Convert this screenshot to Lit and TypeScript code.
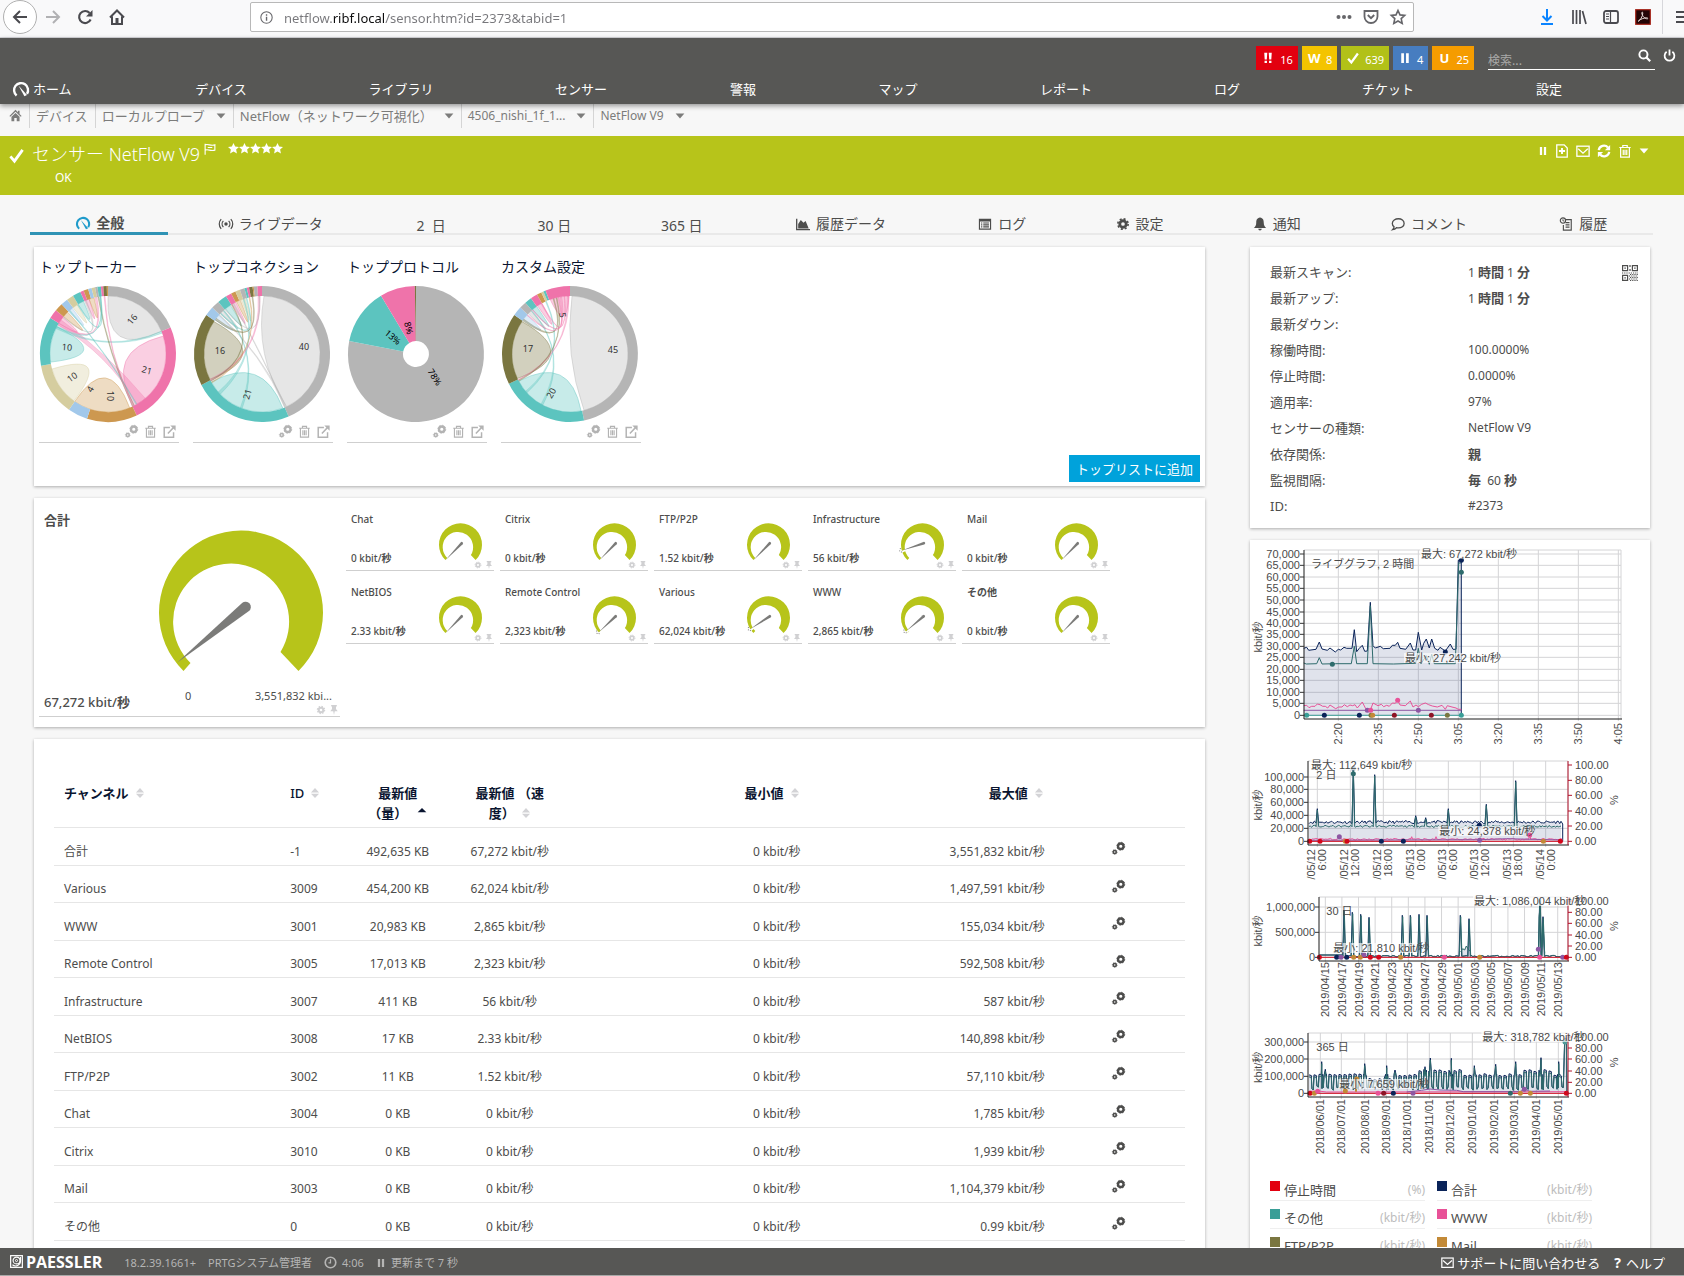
import { LitElement, html, css, svg } from "lit";
import { customElement } from "lit/decorators.js";

type Pt = [number, number];

/* ---------- icons, all on a 16 x 16 grid ---------- */
const tooth = (cx: number, cy: number, r: number, w: number) => svg`
  <circle cx=${cx} cy=${cy} r=${r} fill="none" stroke="currentColor" stroke-width=${w}></circle>
  <circle cx=${cx} cy=${cy} r=${r + w / 2 + 0.6} fill="none" stroke="currentColor" stroke-width="1.8"
    stroke-dasharray="${((r + w / 2 + 0.6) * Math.PI) / 8} ${((r + w / 2 + 0.6) * Math.PI) / 8}"></circle>`;

const shapes: Record<string, unknown> = {
  back: svg`<path d="M15 8H2M8 2 2 8l6 6" fill="none" stroke="currentColor" stroke-width="2"/>`,
  forward: svg`<path d="M1 8h13M8 2l6 6-6 6" fill="none" stroke="currentColor" stroke-width="2"/>`,
  reload: svg`<path d="M13.6 10.5A6 6 0 1 1 12.6 4" fill="none" stroke="currentColor" stroke-width="2.2"/><path d="M15.5 1v6.5H9z" fill="currentColor"/>`,
  house: svg`<path d="M1 8.5 8 1.5l7 7M3 7.500V15h10V7.500" fill="none" stroke="currentColor" stroke-width="2"/><path d="M6.500 9h3v6h-3z" fill="currentColor"/>`,
  info: svg`<circle cx="8" cy="8" r="7" fill="none" stroke="currentColor" stroke-width="1.300"/><path d="M7.200 4h1.700v1.700H7.200zM7.200 7h1.700v5H7.200z" fill="currentColor"/>`,
  dots: svg`<circle cx="2.500" cy="8" r="2" fill="currentColor"/><circle cx="8" cy="8" r="2" fill="currentColor"/><circle cx="13.500" cy="8" r="2" fill="currentColor"/>`,
  pocket: svg`<path d="M1.500 2h13v5.500a6.500 6.500 0 0 1-13 0z" fill="none" stroke="currentColor" stroke-width="1.800"/><path d="m4.800 6 3.200 3.200L11.200 6" fill="none" stroke="currentColor" stroke-width="1.900"/>`,
  starline: svg`<path d="m8 1.500 2 4.400 4.700.5-3.500 3.200 1 4.800L8 12l-4.200 2.400 1-4.800L1.300 6.400 6 5.900z" fill="none" stroke="currentColor" stroke-width="1.600"/>`,
  star: svg`<path d="m8 0 2.400 5.200 5.600.6-4.200 3.800 1.200 5.700L8 12.500l-5 2.800 1.200-5.700L0 5.800l5.600-.6z" fill="currentColor"/>`,
  download: svg`<path d="M8 0v11M3.500 7 8 11.500 12.500 7M2 15h12" fill="none" stroke="currentColor" stroke-width="2"/>`,
  library: svg`<path d="M2 1v14M5.500 1v14M9 1v14M11.500 2l3.500 13" fill="none" stroke="currentColor" stroke-width="1.700"/>`,
  sidebar: svg`<rect x="1" y="2" width="14" height="12" rx="2" fill="none" stroke="currentColor" stroke-width="1.800"/><path d="M7.500 2v12M3 5h3M3 7.500h3M3 10h3" stroke="currentColor" stroke-width="1.200"/>`,
  pdf: svg`<rect x=".7" y=".7" width="14.600" height="14.600" fill="#240506" stroke="#a8261a" stroke-width="1.200"/><path d="M3 12.500c2-1 4.800-5 4.800-8.500 0-1.200-1.300-1.200-1 .3.600 3 3.200 5.700 5.700 5.500.8-.2.300-1.100-1-1-2.500 0-6 1.400-8 3" fill="none" stroke="#e8dcd8" stroke-width="1"/>`,
  burger: svg`<path d="M0 3h16M0 8h16M0 13h16" stroke="currentColor" stroke-width="2"/>`,
  gauge: svg`<path d="M3.600 14.500A7 7 0 1 1 14 12.800" fill="none" stroke="currentColor" stroke-width="2.400"/><path d="M5.500 4.500 14 14l-2.600 1.200z" fill="currentColor"/>`,
  search: svg`<circle cx="6.700" cy="6.700" r="5" fill="none" stroke="currentColor" stroke-width="2.400"/><path d="m10.500 10.500 4.500 4.500" stroke="currentColor" stroke-width="2.800"/>`,
  power: svg`<path d="M4.500 3.500a6 6 0 1 0 7 0M8 .5V8" fill="none" stroke="currentColor" stroke-width="2.200"/>`,
  down2: svg`<path d="M3 1h4l-.6 9H3.600zM9 1h4l-.6 9H9.600zM3.400 11.500h3.200v3.200H3.400zM9.400 11.500h3.200v3.200H9.400z" fill="currentColor"/>`,
  check: svg`<path d="m1.500 9 4.300 5L14.500 2" fill="none" stroke="currentColor" stroke-width="3"/>`,
  pause: svg`<path d="M3 1.500h3.600v13H3zM9.400 1.500H13v13H9.400z" fill="currentColor"/>`,
  homefill: svg`<path d="M8 1 .5 8.500l1 1L8 3.500l6.500 6 1-1L13 6V2h-2v2zM3 9.500 8 5l5 4.500V15H9.500v-4h-3v4H3z" fill="currentColor"/>`,
  flag: svg`<path d="M1.500 1v14.500M1.500 2.500c4-2 7 2 13 0v7c-6 2-9-2-13 0M5 6h6" fill="none" stroke="currentColor" stroke-width="1.500"/>`,
  addreport: svg`<path d="M2 1h8.500L14 4.500V15H2z" fill="none" stroke="currentColor" stroke-width="1.500"/><path d="M8 4.500v7M4.500 8h7" stroke="currentColor" stroke-width="2.200"/>`,
  mail: svg`<rect x="1" y="2.500" width="14" height="11.500" fill="none" stroke="currentColor" stroke-width="1.500"/><path d="m2.500 5.500 5.500 5 5.500-5" fill="none" stroke="currentColor" stroke-width="1.500"/>`,
  refresh: svg`<path d="M2 7a6 6 0 0 1 10.500-3M14 9a6 6 0 0 1-10.500 3" fill="none" stroke="currentColor" stroke-width="2.600"/><path d="M15 1v6H9zM1 15V9h6z" fill="currentColor"/>`,
  trash: svg`<path d="M1.500 4h13M5.500 4V1.700h5V4M3 4v11h10V4M6 6.500v6M8 6.500v6M10 6.500v6" fill="none" stroke="currentColor" stroke-width="1.400"/>`,
  caret: svg`<path d="M1 4h14l-7 8z" fill="currentColor"/>`,
  live: svg`<circle cx="8" cy="8" r="2" fill="currentColor"/><path d="M5 4.500a5 5 0 0 0 0 7M11 4.500a5 5 0 0 1 0 7M2.500 2.500a8 8 0 0 0 0 11M13.500 2.500a8 8 0 0 1 0 11" fill="none" stroke="currentColor" stroke-width="1.400"/>`,
  area: svg`<path d="M.8 2v12.500H16" fill="none" stroke="currentColor" stroke-width="1.500"/><path d="M2.500 13V8l3-4.500 3 3 2.500-2L14.500 13z" fill="currentColor"/>`,
  log: svg`<path d="M1 2h14v12.500H1zM2.300 5v8.200h11.400V5z" fill="currentColor" fill-rule="evenodd"/><path d="M3.500 6.800h1.400M6 6.800h6.500M3.500 9h1.400M6 9h6.500M3.500 11.300h1.400M6 11.300h6.500" stroke="currentColor" stroke-width="1.200"/>`,
  gear: tooth(8, 8, 3.700, 3.200),
  gears: svg`<circle cx="10.800" cy="5.200" r="3.400" fill="none" stroke="currentColor" stroke-width="2.900"/><circle cx="10.800" cy="5.200" r="4.900" fill="none" stroke="currentColor" stroke-width="1" stroke-dasharray="1.900 1.900"/><circle cx="3.400" cy="12.300" r="1.900" fill="none" stroke="currentColor" stroke-width="2"/><circle cx="3.400" cy="12.300" r="3" fill="none" stroke="currentColor" stroke-width=".8" stroke-dasharray="1.200 1.100"/>`,
  bell: svg`<path d="M8 .5c3.500.5 4.300 3 4.300 6 0 3 1 4.500 2.700 6H1c1.700-1.500 2.700-3 2.700-6 0-3 .8-5.500 4.300-6zM6 13.300h4a2 2 0 0 1-4 0z" fill="currentColor"/>`,
  comment: svg`<path d="M8.500 2C12 2 15 4.300 15 7.300s-3 5.200-6.500 5.200c-.8 0-1.500-.1-2.200-.3-1.300 1.300-2.800 2-4.500 2.300 1-1 1.700-2 1.700-3.300C2.300 10.200 1.500 8.800 1.500 7.300 1.500 4.300 5 2 8.500 2z" fill="none" stroke="currentColor" stroke-width="1.500"/>`,
  history: svg`<path d="M8 3h6v12H5V9M7.500 6.500H12M7.500 9H12M7.500 11.500H12" fill="none" stroke="currentColor" stroke-width="1.300"/><circle cx="4.500" cy="4" r="3" fill="none" stroke="currentColor" stroke-width="1.300"/><path d="M4.500 2.500V4.500H6" fill="none" stroke="currentColor" stroke-width="1"/>`,
  external: svg`<path d="M8.500 3H1.500v12H13V9M6 10.500 14 2" fill="none" stroke="currentColor" stroke-width="1.800"/><path d="M9 .5h6.500V7z" fill="currentColor"/>`,
  pin: svg`<path d="M3.500 0h9v2.500h-1.300v4L14 10H9.200L8 16l-1.200-6H2l2.800-3.500v-4H3.500z" fill="currentColor"/>`,
  clock: svg`<circle cx="8" cy="8" r="6.500" fill="none" stroke="currentColor" stroke-width="2"/><path d="M8 4v4.500H5.500" fill="none" stroke="currentColor" stroke-width="1.500"/>`,
  sort: svg`<path d="M8 0l6.500 7h-13zM8 16l6.500-7h-13z" fill="currentColor"/>`,
  sortup: svg`<path d="M8 3l7 7H1z" fill="currentColor"/>`,
  qr: svg`<path d="M.6.6h5v5h-5zM10.400.6h5v5h-5zM.6 10.400h5v5h-5z" fill="none" stroke="currentColor" stroke-width="1.200"/><path d="M2.400 2.400h1.400v1.400H2.400zM12.200 2.400h1.400v1.400h-1.400zM2.400 12.200h1.400v1.400H2.400zM7.400 0h1.200v2H7.400zM7.400 4h1.200v2H7.400z" fill="currentColor"/><path d="M0 8h16M8 9.500h8M7 11h9M8 12.500h8M7 14h9M8 15.500h8" stroke="currentColor" stroke-width="1" stroke-dasharray="1.200 1"/>`,
  logo: svg`<rect x=".8" y=".8" width="14.400" height="14.400" fill="none" stroke="currentColor" stroke-width="1.500"/><circle cx="8" cy="6.800" r="4.200" fill="none" stroke="currentColor" stroke-width="1.400"/><circle cx="8" cy="6.800" r="1.300" fill="none" stroke="currentColor" stroke-width="1.200"/><path d="M13 2.500v5A6 6 0 0 1 3 12" fill="none" stroke="currentColor" stroke-width="1.300"/>`,
};
const icon = (name: string, size = "m") =>
  html`<svg class="ic ${size}" viewBox="0 0 16 16" aria-hidden="true">${shapes[name]}</svg>`;

/* ---------- top list diagrams ---------- */
const G = "#b5b5b5", T = "#5cc4bf", P = "#ef73aa", O = "#cd9850", B = "#a2c8ea", K = "#d5cd9f", V = "#7a7640";
const at = (deg: number, r: number): Pt => {
  const a = (deg * Math.PI) / 180;
  return [68 + r * Math.sin(a), 68 - r * Math.cos(a)];
};
const f = (p: Pt) => p[0].toFixed(1) + " " + p[1].toFixed(1);
const slice = (a: number, b: number, r0: number, r1: number) => {
  const big = b - a > 180 ? 1 : 0;
  return `M${f(at(a, r1))}A${r1} ${r1} 0 ${big} 1 ${f(at(b, r1))}L${f(at(b, r0))}A${r0} ${r0} 0 ${big} 0 ${f(at(a, r0))}Z`;
};
const ribbon = (a: number, b: number, c: number, d: number) =>
  `M${f(at(a, 58))}A58 58 0 0 1 ${f(at(b, 58))}Q68 68 ${f(at(c, 58))}A58 58 0 0 1 ${f(at(d, 58))}Q68 68 ${f(at(a, 58))}Z`;
const lobe = (a: number, b: number, pull: number) => {
  const m = at((a + b) / 2, 58 * pull);
  return `M${f(at(a, 58))}A58 58 0 ${b - a > 180 ? 1 : 0} 1 ${f(at(b, 58))}Q${f(m)} ${f(at(a, 58))}Z`;
};

interface Ring {
  title: string;
  inner: number;
  stops: [number, string][];
  lobes: [number, number, number, string][];
  ribbons: [number, number, number, number, string][];
  labels: [number, number, number, string][];
}
const rings: Ring[] = [
  {
    title: "トップトーカー", inner: 58,
    stops: [[67, G], [155, P], [198, O], [215, B], [260, K], [302, T], [310, P], [317, O], [323, B], [329, K], [336, T], [339, P], [343, O], [346, B], [349, K], [351, G], [354, T], [356, P], [359, V], [360, O]],
    lobes: [[0, 67, -0.1, G], [72, 153, -0.1, P], [158, 215, -0.05, O], [216, 255, -0.1, K], [262, 298, -0.1, T], [302, 309, 0.3, P], [310, 316, 0.2, O], [317, 322, 0.3, B], [323, 328, 0.3, K], [329, 335, 0.35, T], [337, 341, 0.3, P], [341, 346, 0.3, O]],
    ribbons: [[140, 150, 300, 306, P], [67, 69, 296, 298, T], [153, 155, 350, 351, V], [150, 151, 318, 319, T], [154, 155, 356, 357, P], [300, 302, 347, 349, P], [298, 299, 352, 353, T], [309, 310, 336, 338, G], [328, 329, 352, 353, T]],
    labels: [[92, 33, -50, "16"], [107, 84, 15, "21"], [70, 110, 90, "10"], [50, 103, -60, "4"], [32, 91, -35, "10"], [27, 61, 5, "10"]],
  },
  {
    title: "トップコネクション", inner: 58,
    stops: [[157, G], [243, T], [305, V], [313, B], [320, G], [328, T], [333, P], [337, O], [341, K], [345, G], [347, T], [349, P], [352, V], [353, O], [356, G], [360, P]],
    lobes: [[2, 155, -0.15, G], [159, 241, 0, T], [244, 304, -0.2, V], [306, 312, 0.3, B], [314, 319, 0.2, G], [321, 327, 0.2, T], [329, 333, 0.2, P], [334, 338, 0.2, O], [339, 343, 0.2, K]],
    ribbons: [[155, 157, 312, 313, G], [156, 157, 330, 331, G], [200, 202, 318, 319, T], [226, 229, 341, 342, T], [242, 244, 356, 358, P], [240, 241, 347, 348, O], [306, 308, 350, 351, V], [314, 315, 344, 345, T], [320, 321, 357, 358, G], [242, 243, 328, 329, V]],
    labels: [[110, 60, 0, "40"], [53, 108, -75, "21"], [26, 64, 0, "16"]],
  },
  {
    title: "トッププロトコル", inner: 13,
    stops: [[281, G], [329, T], [359, P], [360, V]],
    lobes: [], ribbons: [],
    labels: [[87, 91, 58, "78%"], [45, 51, 40, "13%"], [61, 42, 75, "8%"]],
  },
  {
    title: "カスタム設定", inner: 58,
    stops: [[168, G], [244, T], [305, V], [313, B], [319, G], [325, T], [331, P], [335, O], [337, K], [339, T], [360, P]],
    lobes: [[2, 166, -0.1, G], [169, 242, 0, T], [245, 304, -0.2, V], [306, 312, 0.3, B], [314, 318, 0.2, G], [320, 325, 0.2, T], [326, 331, 0.2, P], [340, 359, 0.35, P]],
    ribbons: [[208, 210, 318, 319, T], [228, 230, 335, 336, T], [243, 244, 357, 359, P], [242, 243, 346, 347, V], [305, 307, 343, 344, V], [312, 313, 350, 352, P], [319, 320, 354, 355, P], [330, 331, 348, 349, P]],
    labels: [[111, 63, 0, "45"], [49, 107, -60, "20"], [26, 62, 0, "17"], [61, 29, 85, "5"]],
  },
];
const ringSvg = (r: Ring) => html`<svg class="ring" viewBox="0 0 136 136" role="img" aria-label=${r.title}>
  ${r.lobes.map(([a, b, p, c]) => svg`<path d=${lobe(a, b, p)} fill=${c} fill-opacity=".34" stroke=${c} stroke-opacity=".4"/>`)}
  ${r.ribbons.map(([a, b, c, d, col]) => svg`<path d=${ribbon(a, b, c, d)} fill=${col} fill-opacity=".34" stroke=${col} stroke-opacity=".4" stroke-width=".7"/>`)}
  ${r.stops.map(([end, c], i) => svg`<path d=${slice(i ? r.stops[i - 1][0] : 0, end, r.inner, 68)} fill=${c}/>`)}
  ${r.labels.map(([x, y, rot, t]) => svg`<text class=${r.inner < 20 ? "rl dark" : "rl"} x=${x} y=${y} text-anchor="middle" dominant-baseline="central" transform="rotate(${rot} ${x} ${y})">${t}</text>`)}
</svg>`;

/* ---------- gauges ---------- */
const dial = (turn: number, big = false, marker = false) => html`<svg class=${big ? "dial big" : "dial"} viewBox="0 0 164 144" aria-hidden="true">
  <path d="M24.500 141A82 82 0 1 1 139.500 141L121.500 122A58 58 0 1 0 31.500 133Z" fill="#b7c41a"/>
  ${marker ? svg`<g transform="rotate(${turn} 87 78)"><path d="M31 128 20 140l-12-2M12 127l-4 4" stroke="#fff" stroke-width="7" fill="none"/><path d="M22 140l-12-2M10 128l4 5" stroke="#888" stroke-width="4" fill="none" stroke-dasharray="4 4"/></g>` : ""}
  <path d="M19 134 83 73a5 5 0 0 1 7 8Z" fill="#7b7b79" transform="rotate(${turn} 87 78)"/>
</svg>`;
const gauges: [string, string, number, boolean][] = [
  ["Chat", "0", -6, false], ["Citrix", "0", -6, false], ["FTP/P2P", "1.52", -6, false], ["Infrastructure", "56", 22, true], ["Mail", "0", -6, false],
  ["NetBIOS", "2.33", -6, false], ["Remote Control", "2,323", -3, true], ["Various", "62,024", 7, true], ["WWW", "2,865", 0, true], ["その他", "0", -6, false],
];

/* ---------- history graphs ---------- */
let seed = 11;
const rnd = () => ((seed = (seed * 16807) % 2147483647) / 2147483647);
const line = (pts: Pt[], dy: number) => pts.map(([x, y], i) => (i ? "L" : "M") + (x / 3 - 10).toFixed(1) + " " + (y / 3 + dy).toFixed(1)).join("");
const noisy = (x0: number, x1: number, step: number, base: number, amp: number, peaks: Pt[], w: number): Pt[] => {
  const out: Pt[] = [];
  for (let x = x0; x <= x1; x += step) {
    if (peaks.some(([px]) => Math.abs(px - x) < w)) continue;
    out.push([x, base - rnd() * amp]);
  }
  peaks.forEach(([x, y]) => out.push([x - w, base - 2], [x, y], [x + w, base - 2]));
  return out.sort((a, b) => a[0] - b[0]);
};
const NAVY = "#0a2359", TEAL = "#2e6b6c", PINK = "#e85298", PURPLE = "#8d57a3", RED = "#d4071b", OCHRE = "#c38a37", WINE = "#8e1426";

interface Graph {
  name: string; h: number; dy: number; left: number; right: number; top: number; axis: number; gap: number;
  ys: [number, string][]; pct: number[]; xs: [number, string, string?][];
  title: [number, number, string]; max: [number, number, string]; min: [number, number, string];
  series: [Pt[], string, number][]; area: Pt[]; dots: [number, number, string][];
  unitY: number;
}
const total: Pt[] = [[191, 340], [200, 337], [206, 346], [228, 343], [238, 321], [246, 342], [262, 346], [270, 339], [286, 351], [295, 343], [302, 345], [312, 337], [320, 340], [336, 340], [343, 284], [350, 350], [358, 340], [367, 331], [374, 349], [382, 348], [391, 202], [399, 332], [406, 339], [421, 334], [430, 341], [450, 340], [457, 331], [466, 331], [473, 322], [480, 340], [497, 343], [511, 324], [519, 345], [527, 345], [535, 292], [545, 345], [551, 325], [559, 312], [568, 339], [575, 312], [584, 340], [594, 346], [600, 337], [616, 348], [631, 327], [639, 343], [648, 343], [655, 76], [664, 76], [664, 541]];
const various: Pt[] = [[191, 384], [199, 387], [230, 386], [238, 368], [246, 387], [286, 386], [334, 386], [343, 334], [350, 386], [382, 386], [391, 212], [399, 386], [460, 387], [527, 385], [535, 340], [543, 386], [559, 362], [568, 388], [575, 358], [583, 386], [646, 386], [656, 84], [663, 84]];
const www: Pt[] = [[191, 512], [200, 511], [207, 518], [215, 514], [225, 514], [232, 507], [240, 509], [248, 514], [256, 514], [263, 519], [270, 510], [287, 521], [296, 516], [306, 516], [313, 509], [322, 515], [330, 510], [338, 512], [345, 509], [352, 519], [367, 501], [377, 521], [384, 527], [391, 526], [399, 504], [414, 512], [424, 508], [431, 515], [440, 511], [448, 514], [457, 504], [466, 505], [473, 496], [480, 510], [496, 512], [511, 498], [519, 516], [528, 510], [535, 515], [545, 508], [556, 504], [566, 509], [577, 513], [592, 516], [606, 511], [616, 523], [622, 512], [636, 516], [648, 519], [655, 523], [664, 523]];
const p2: Pt[] = [[232, 176], [340, 55], [404, 74], [527, 197], [557, 203], [625, 176], [739, 163], [827, 92]];
const p30: Pt[] = [[312, 480], [337, 487], [362, 493], [387, 502], [487, 496], [511, 496], [537, 493], [561, 496], [661, 496], [687, 506], [899, 448], [909, 500]];
const p365: Pt[] = [[245, 140], [256, 163], [374, 146], [440, 152], [465, 165], [555, 155], [571, 129], [634, 130], [703, 152], [767, 148], [827, 140], [903, 128], [956, 140]];
const weekly = (): Pt[] => {
  const out: Pt[] = [];
  for (let x = 207; x < 972; x += 15) {
    const hi = (x > 535 && x < 660) || (x > 850 && x < 935) ? 163 : x > 385 && x < 450 ? 188 : 176;
    const top = hi + rnd() * 6;
    out.push([x, top], [x + 7, top + 2], [x + 9, 212 + rnd() * 12], [x + 13, 214 + rnd() * 12]);
  }
  p365.forEach(([x, y]) => out.push([x - 3, 178], [x, y], [x + 3, 178]));
  out.push([974, 70], [979, 70], [981, 236]);
  return out.sort((a, b) => a[0] - b[0]);
};
const close = (pts: Pt[], zero: number): Pt[] => [[pts[0][0], zero], ...pts, [pts[pts.length - 1][0], zero]];
const d2 = noisy(207, 966, 4, 221, 9, p2, 4);
const d2b = noisy(207, 966, 4, 232, 6, p2.map(([x, y]) => [x, y + 4] as Pt), 4);
const flat30: Pt[] = [[238, 615], [305, 615]];
const d30 = [...flat30, ...noisy(308, 978, 5, 621, 5, p30, 4)];
const y365 = weekly();

const graphs: Graph[] = [
  {
    name: "ライブグラフ", h: 215, dy: -5, left: 54, right: 371, top: 10, axis: 179, gap: 4,
    ys: [57, 91, 126, 160, 195, 231, 265, 298, 334, 367, 403, 436, 472, 505, 541].map((y, i) => [y, ((14 - i) * 5000).toLocaleString("en-US")]),
    pct: [], xs: ["2:20", "2:35", "2:50", "3:05", "3:20", "3:35", "3:50", "4:05"].map((t, i) => [295 + i * 120, t]),
    title: [213, 86, "ライブグラフ, 2 時間"], max: [543, 56, "最大: 67,272 kbit/秒"], min: [495, 369, "最小: 27,242 kbit/秒"],
    area: close(total, 541),
    series: [[total, NAVY, 1], [various, TEAL, 1], [www, PINK, 1], [[[191, 526], [664, 526]], PURPLE, 1], [[[191, 541], [664, 541]], "#3a9e97", 1]],
    dots: [[200, 541, "#3a9e97"], [253, 541, NAVY], [358, 541, NAVY], [393, 541, "#7a7640"], [398, 541, OCHRE], [463, 541, WINE], [574, 541, WINE], [622, 541, "#7a7640"], [664, 541, "#3a9e97"], [382, 526, PURPLE], [392, 526, PINK], [535, 526, PURPLE], [473, 496, PINK], [277, 388, TEAL], [616, 351, NAVY], [664, 76, NAVY], [664, 112, TEAL]],
    unitY: 306,
  },
  {
    name: "2 日", h: 136, dy: -5, left: 58, right: 318, top: 6, axis: 90, gap: 4,
    ys: [[81, "100,000"], [118, "80,000"], [157, "60,000"], [196, "40,000"], [235, "20,000"], [274, "0"]],
    pct: [45, 91, 136, 183, 228, 274],
    xs: [[232, "/05/12", "6:00"], [331, "/05/12", "12:00"], [430, "/05/12", "18:00"], [527, "/05/13", "0:00"], [625, "/05/13", "6:00"], [721, "/05/13", "12:00"], [820, "/05/13", "18:00"], [917, "/05/14", "0:00"]],
    title: [229, 75, "2 日"], max: [213, 45, "最大: 112,649 kbit/秒"], min: [598, 243, "最小: 24,378 kbit/秒"],
    area: close(d2, 274),
    series: [[[...d2, [968, 222], [968, 274]], NAVY, 1], [d2b, TEAL, 1], [noisy(207, 968, 5, 270, 5, [[515, 260], [588, 260], [869, 252]], 3), PINK, 1], [[[207, 271], [720, 269], [800, 266], [968, 270]], PURPLE, 1], [[[207, 274], [968, 274]], RED, 1]],
    dots: [[209, 274, RED], [240, 274, RED], [316, 274, OCHRE], [321, 274, RED], [424, 274, NAVY], [490, 274, NAVY], [298, 260, PURPLE], [719, 271, PURPLE], [718, 226, NAVY], [869, 255, PINK], [910, 274, OCHRE], [961, 274, RED], [340, 55, "#5f7f93"], [340, 71, TEAL]],
    unitY: 165,
  },
  {
    name: "30 日", h: 136, dy: -141, left: 69, right: 318, top: 6, axis: 70, gap: 1,
    ys: [[471, "1,000,000"], [547, "500,000"], [622, "0"]],
    pct: [453, 487, 520, 555, 588, 622],
    xs: ["2019/04/15", "2019/04/17", "2019/04/19", "2019/04/21", "2019/04/23", "2019/04/25", "2019/04/27", "2019/04/29", "2019/05/01", "2019/05/03", "2019/05/05", "2019/05/07", "2019/05/09", "2019/05/11", "2019/05/13"].map((t, i) => [256 + i * 49.8, t]),
    title: [259, 483, "30 日"], max: [702, 453, "最大: 1,086,004 kbit/秒"], min: [280, 594, "最小: 21,810 kbit/秒"],
    area: close([[662, 600], [670, 598], [682, 590], [690, 608]], 622),
    series: [[d30, NAVY, 1], [d30.map(([x, y]) => [x + 1, y < 600 ? y + 4 : y] as Pt), TEAL, 1], [[[662, 606], [668, 596], [674, 600], [679, 588], [684, 596], [690, 604]], TEAL, 1], [[[896, 600], [897, 500], [901, 466], [905, 590], [909, 520], [914, 610]], TEAL, 1], [[[236, 622], [981, 622]], RED, 1]],
    dots: [[238, 622, RED], [290, 622, NAVY], [303, 622, PURPLE], [320, 622, NAVY], [341, 622, OCHRE], [361, 622, OCHRE], [372, 614, PURPLE], [391, 622, RED], [416, 622, RED], [482, 622, OCHRE], [613, 622, PINK], [719, 622, OCHRE], [895, 598, PURPLE], [899, 622, PINK], [968, 622, PURPLE], [979, 622, RED]],
    unitY: 543,
  },
  {
    name: "365 日", h: 136, dy: -12, left: 58, right: 318, top: 6, axis: 70, gap: 2,
    ys: [[81, "300,000"], [132, "200,000"], [184, "100,000"], [235, "0"]],
    pct: [66, 99, 132, 168, 202, 235],
    xs: [[241, "2018/06/01"], [304, "2018/07/01"], [374, "2018/08/01"], [439, "2018/09/01"], [502, "2018/10/01"], [568, "2018/11/01"], [631, "2018/12/01"], [697, "2019/01/01"], [763, "2019/02/01"], [823, "2019/03/01"], [889, "2019/04/01"], [955, "2019/05/01"]],
    title: [229, 96, "365 日"], max: [727, 66, "最大: 318,782 kbit/秒"], min: [298, 207, "最小: 7,659 kbit/秒"],
    area: close(y365, 235),
    series: [[y365, NAVY, 1], [y365.map(([x, y]) => [x, y > 200 ? y : y + 6] as Pt), TEAL, 1], [[[207, 229], [235, 228], [260, 231], [980, 230]], PINK, 1], [[[500, 231], [545, 226], [570, 222], [600, 225], [650, 226], [670, 230], [840, 230], [853, 222], [870, 229], [930, 228]], PURPLE, 1], [[[316, 230], [316, 208]], OCHRE, 2], [[[348, 230], [348, 192]], OCHRE, 2], [[[205, 235], [981, 235]], RED, 1]],
    dots: [[210, 235, RED], [223, 235, OCHRE], [233, 229, PINK], [316, 228, OCHRE], [350, 192, OCHRE], [414, 235, PINK], [431, 235, WINE], [460, 235, NAVY], [519, 235, PURPLE], [811, 235, TEAL], [841, 235, OCHRE], [853, 223, PURPLE], [871, 235, OCHRE], [975, 81, "#4f9a99"], [979, 235, RED]],
    unitY: 157,
  },
];

const graphSvg = (g: Graph) => {
  const X = (x: number) => x / 3 - 10;
  const Y = (y: number) => y / 3 + g.dy;
  const note = ([x, y, t]: [number, number, string]) => svg`<text x=${X(x)} y=${Y(y) + 4}>${t}</text>`;
  const back = ([x, y, t]: [number, number, string]) => svg`<rect x=${X(x) - 1} y=${Y(y) - 5} width=${t.length * 5} height="10" fill="#fff" fill-opacity=".65"/>`;
  return html`<svg class="graph" viewBox="0 0 400 ${g.h}" role="img" aria-label=${g.name}>
    ${g.ys.map(([y]) => svg`<path d="M${g.left} ${Y(y)}H${g.right}" stroke="#d4d4d6"/>`)}
    ${g.xs.map(([x]) => svg`<path d="M${X(x)} ${g.top}V${g.axis + 2}" stroke="#d4d4d6"/>`)}
    <path d="M${g.left} ${g.top}H${g.right}V${g.axis}" fill="none" stroke="#d4d4d6"/>
    <path d=${line(g.area, g.dy) + "Z"} fill="#32467d" fill-opacity=".15"/>
    ${g.series.map(([p, c, w]) => svg`<path d=${line(p, g.dy)} fill="none" stroke=${c} stroke-width=${w}/>`)}
    ${g.dots.map(([x, y, c]) => svg`<circle cx=${X(x)} cy=${Y(y)} r="2.500" fill=${c}/>`)}
    <path d="M${g.left} ${g.top}V${g.axis}H${g.right + 1}" fill="none" stroke="#1a1a1a" stroke-width="1"/>
    ${g.ys.map(([y, t]) => svg`<path d="M${g.left - 4} ${Y(y)}h4" stroke="#333"/><text x=${g.left - 4} y=${Y(y) + 4} text-anchor="end">${t}</text>`)}
    ${g.pct.length ? svg`<path d="M${g.right} ${g.top}V${g.axis}" stroke="#b3122a"/>` : ""}
    ${g.pct.map((y, i) => svg`<path d="M${g.right} ${Y(y)}h4" stroke="#b3122a"/><text x=${g.right + 7} y=${Y(y) + 4}>${(100 - i * 20).toFixed(2)}</text>`)}
    ${g.pct.length ? svg`<text transform="translate(368 ${Y(g.unitY) - 5}) rotate(-90)" text-anchor="middle">%</text>` : ""}
    ${g.xs.map(([x, a, b]) => svg`<text transform="translate(${X(x) + (b ? -2 : 4)} ${g.axis + g.gap}) rotate(-90)" text-anchor="end">${a}</text>${b ? svg`<text transform="translate(${X(x) + 9} ${g.axis + g.gap}) rotate(-90)" text-anchor="end">${b}</text>` : ""}`)}
    ${back(g.min)}${back(g.max)}${note(g.title)}${note(g.max)}${note(g.min)}
    <text transform="translate(12 ${Y(g.unitY)}) rotate(-90)" text-anchor="middle">kbit/秒</text>
  </svg>`;
};

/* ---------- page data ---------- */
const rows = [
  ["合計", "-1", "492,635 KB", "67,272", "3,551,832"], ["Various", "3009", "454,200 KB", "62,024", "1,497,591"],
  ["WWW", "3001", "20,983 KB", "2,865", "155,034"], ["Remote Control", "3005", "17,013 KB", "2,323", "592,508"],
  ["Infrastructure", "3007", "411 KB", "56", "587"], ["NetBIOS", "3008", "17 KB", "2.33", "140,898"],
  ["FTP/P2P", "3002", "11 KB", "1.52", "57,110"], ["Chat", "3004", "0 KB", "0", "1,785"],
  ["Citrix", "3010", "0 KB", "0", "1,939"], ["Mail", "3003", "0 KB", "0", "1,104,379"], ["その他", "0", "0 KB", "0", "0.99"],
];
const hour = html`1 <b>時間</b> 1 <b>分</b>`;
const facts: [string, unknown][] = [
  ["最新スキャン:", hour], ["最新アップ:", hour], ["最新ダウン:", ""], ["稼働時間:", "100.0000%"],
  ["停止時間:", "0.0000%"], ["適用率:", "97%"], ["センサーの種類:", "NetFlow V9"], ["依存関係:", html`<b>親</b>`],
  ["監視間隔:", html`<b>毎</b>&nbsp; 60 <b>秒</b>`], ["ID:", "#2373"],
];
const legend = [
  ["red", "停止時間", "(%)"], ["navy", "合計", "(kbit/秒)"], ["teal", "その他", "(kbit/秒)"],
  ["pink", "WWW", "(kbit/秒)"], ["olive", "FTP/P2P", "(kbit/秒)"], ["ochre", "Mail", "(kbit/秒)"],
];
const tabs = [
  ["gauge", "全般"], ["live", "ライブデータ"], ["", "2\u00a0 日"], ["", "30 日"], ["", "365 日"], ["area", "履歴データ"],
  ["log", "ログ"], ["gear", "設定"], ["bell", "通知"], ["comment", "コメント"], ["history", "履歴"],
];
const badges = [["red", "down2", "16"], ["yellow", "W", "8"], ["green", "check", "639"], ["blue", "pause", "4"], ["orange", "U", "25"]];
const crumbs = [["ローカルプローブ", ""], ["NetFlow（ネットワーク可視化）", ""], ["4506_nishi_1f_1...", "latin"], ["NetFlow V9", "latin"]];
const menu = ["デバイス", "ライブラリ", "センサー", "警報", "マップ", "レポート", "ログ", "チケット", "設定"];

@customElement("app-root")
export class AppRoot extends LitElement {
  static styles = css`
    :host { display: flex; flex-direction: column; height: 100vh; overflow: hidden; background: #f7f7f7; color: #4d4d4c;
      font: 12px/20px "Noto Sans", "Noto Sans CJK JP", sans-serif; }
    * { box-sizing: border-box; }
    a { color: inherit; text-decoration: none; }
    button { font: inherit; color: inherit; background: none; border: 0; padding: 0; display: inline-flex; align-items: center; }
    h1, h2, h3, ul, dl, dd { margin: 0; padding: 0; list-style: none; font-weight: 400; }
    b { font-weight: 700; }
    svg { display: block; overflow: visible; }
    .ic { flex: none; }
    .xs { width: 8px; height: 8px; } .s { width: 10px; height: 10px; } .m { width: 13px; height: 13px; } .l { width: 16px; height: 16px; }

    .chrome { display: flex; align-items: center; height: 38px; flex: none; padding: 0 0 3px 3px; background: #f9f9fa; border-bottom: 1px solid #d7d7db; color: #4a4a4f; overflow: hidden; }
    .chrome .back { width: 34px; height: 34px; border: 1px solid #b0b0b0; border-radius: 50%; background: #fff; justify-content: center; }
    .chrome .dim { color: #b1b1b3; margin-left: 8px; }
    .chrome .step { margin-left: 16px; }
    .address { flex: 1; display: flex; align-items: center; gap: 11px; height: 30px; margin-left: 125px; padding: 0 7px 0 9px; background: #fff; border: 1px solid #b8b8b8; border-radius: 2px; color: #66666a; }
    .address input { flex: 1; min-width: 0; border: 0; outline: 0; padding: 2px 0 0; font: 13px/20px "Noto Sans", sans-serif; -webkit-text-fill-color: transparent;
      background: linear-gradient(to right, #77777b 48px, #0c0c0d 48px, #0c0c0d 100px, #77777b 100px); -webkit-background-clip: text; background-clip: text; }
    .tools { display: flex; align-items: center; gap: 16px; margin-left: 125px; }
    .tools .dl { color: #0a84ff; }
    .menu-btn { margin-left: 11px; height: 34px; border-left: 1px solid #d7d7db; padding-left: 13px; margin-right: -8px; }

    .top { flex: none; background: #575755; color: #fff; padding-top: 8px; height: 66px; box-shadow: 0 2px 5px rgba(0, 0, 0, .4); position: relative; z-index: 1; }
    .status { display: flex; justify-content: flex-end; gap: 4px; padding-right: 8px; height: 24px; }
    .badge { display: flex; align-items: center; gap: 6px; padding: 0 5px 0 6px; font-size: 11px; }
    .badge .ic { width: 12px; height: 12px; }
    .badge b { width: 12px; text-align: center; font: 700 13px/20px "Open Sans", sans-serif; }
    .badge span { padding-top: 3px; }
    .badge.red { background: #e2000f; } .badge.yellow { background: #f4c400; } .badge.green { background: #b2c118; }
    .badge.blue { background: #477dc0; } .badge.orange { background: #f59c00; }
    .search { display: flex; align-items: center; width: 167px; margin-left: 10px; border-bottom: 1px solid #fff; }
    .search input { flex: 1; min-width: 0; border: 0; outline: 0; padding: 4px 0 0; background: none; color: #fff; font: 12px/20px "Noto Sans CJK JP", sans-serif; }
    .search input::placeholder { color: #a9a9a8; opacity: 1; }
    .search button { padding: 0 4px 4px 0; }
    .power { margin-left: 4px; height: 18px; }
    .nav { display: grid; grid-template-columns: 131fr 180fr 180fr 180fr 144fr 166fr 170fr 152fr 170fr 152fr 59fr; height: 34px; align-items: center; padding-top: 4px; font-size: 13px; text-align: center; }
    .nav .home { display: flex; gap: 4px; align-items: center; padding-left: 13px; }

    .crumbs { flex: none; display: flex; height: 32px; color: #7c7c7b; font-size: 13px; line-height: 22px; }
    .crumbs li { display: flex; align-items: center; gap: 11px; height: 24px; padding: 0 7px 1px 6px; border-left: 1px solid #d5d5d5; }
    .crumbs li:first-child { border: 0; padding-left: 9px; }
    .crumbs .latin { font-size: 12px; }

    .banner { flex: none; display: flex; justify-content: space-between; height: 59px; background: #b7c41a; color: #fff; padding: 7px 35px 0 9px; }
    .title { display: flex; gap: 8px; align-items: flex-start; }
    .title h1 { font-size: 18px; line-height: 22px; font-weight: 300; }
    .title .check { padding-top: 5px; }
    .title .check .ic { width: 15px; height: 15px; }
    .title .flag { margin-left: -4px; }
    .title .flag .ic { width: 12px; height: 12px; }
    .title .stars { display: flex; margin-left: 4px; }
    .title .stars .ic { width: 11px; height: 11px; }
    .ok { padding: 3px 0 0 23px; }
    .actions { display: flex; gap: 7px; height: 16px; align-items: center; }
    .actions .m { width: 14px; height: 14px; }

    .tabs { flex: none; display: grid; grid-template-columns: 139fr 198fr 128fr 120fr 136fr 180fr 144fr 132fr 144fr 162fr 148fr; margin: 0 31px 0 30px; height: 40px; border-bottom: 2px solid #e9e9e9; }
    .tabs a { display: flex; align-items: flex-end; justify-content: center; gap: 6px; font-size: 14px; height: 40px; padding: 0 0 2px 8px; line-height: 18px; }
    .tabs a .ic { width: 14px; height: 14px; margin-bottom: 2px; }
    .tabs .plain { padding: 0 0 0 4px; }
    .tabs .on { font-weight: 700; border-bottom: 3px solid #2f93b5; padding: 0 0 0 2px; }
    .tabs .on .ic { color: #1f9bcb; }

    .page { flex: 1; min-height: 0; display: grid; grid-template-columns: minmax(0, 1171fr) minmax(0, 400fr); gap: 45px; padding: 12px 34px 0; align-items: start; overflow: hidden; }
    .col { display: flex; flex-direction: column; gap: 12px; }
    .card { background: #fff; box-shadow: 0 1px 3px rgba(0, 0, 0, .3); }

    .tops { padding: 9px 5px 4px; }
    .rings { display: flex; gap: 14px; }
    .rings li { width: 140px; border-bottom: 1px solid #cfcfcf; height: 187px; }
    .rings h2 { font-size: 14px; line-height: 22px; color: #0a1530; white-space: nowrap; }
    .ring { width: 136px; height: 136px; margin: 8px 0 0 1px; }
    .rl { font-size: 9px; fill: #333; }
    .rl.dark { fill: #000; }
    .ops { display: flex; justify-content: flex-end; gap: 6px; padding: 3px 3px 0 0; color: #b3b3b3; }
    .add { display: flex; justify-content: flex-end; padding-top: 12px; }
    .add button { height: 27px; padding: 0 7px; background: #00a2db; color: #fff; font-size: 13px; }

    .meters { display: flex; gap: 6px; padding: 10px 5px; height: 229px; }
    .primary { width: 301px; height: 209px; border-bottom: 1px solid #cfcfcf; display: grid; grid-template: auto 1fr / 115px 1fr; padding-left: 5px; position: relative; font-size: 13px; font-weight: 500; }
    .primary h2 { font-size: 13px; line-height: 24px; font-weight: 700; }
    .primary .dialbox { grid-row: 1 / 3; grid-column: 2; padding-top: 22px; }
    .dial.big { width: 164px; height: 144px; margin: 0; }
    .scale { display: flex; justify-content: space-between; font-size: 11px; font-weight: 400; padding: 12px 8px 0 26px; white-space: nowrap; }
    .primary .val { align-self: end; white-space: nowrap; padding-bottom: 4px; }
    .pins { position: absolute; right: 1px; bottom: 1px; display: flex; gap: 3px; color: #d0d0d2; }
    .small { display: grid; grid-template-columns: repeat(5, 148px); gap: 10px 6px; align-content: start; }
    .small li { position: relative; height: 63px; border-bottom: 1px solid #cfcfcf; display: flex; justify-content: space-between; padding: 3px 12px 0 5px; font-size: 10px; line-height: 16px; font-weight: 500; }
    .small .txt { display: flex; flex-direction: column; justify-content: space-between; padding-bottom: 4px; white-space: nowrap; }
    .small h3 { font-size: 10px; font-weight: 500; }
    .small h3.jp { font-weight: 700; }
    .dial { width: 43px; height: 38px; margin-top: 12px; }

    .channels { padding: 38px 20px 20px; }
    table { width: 100%; border-collapse: collapse; table-layout: fixed; }
    th { height: 50px; padding: 6px 10px 4px; border-bottom: 1px solid #e6e6e6; color: #0a1530; font-size: 13px; line-height: 20px; font-weight: 700; vertical-align: top; text-align: left; }
    th button { display: inline; text-align: inherit; white-space: nowrap; }
    th .ic { display: inline-block; margin-left: 6px; color: #d3d3d6; }
    th .up { color: #0a1530; margin-left: 10px; vertical-align: 2px; }
    th.lite { font-weight: 500; }
    td { height: 37px; padding: 10px 10px 0; border-bottom: 1px solid #e6e6e6; }
    tr:nth-child(odd) td { height: 38px; }
    .c { text-align: center; } .r { text-align: right; }
    th.r { padding-right: 11px; }
    td .ic { margin: -6px auto 0; }
    td button { display: block; width: 100%; padding-right: 2px; }

    .facts { position: relative; padding: 12px 20px 9px; }
    .facts div { display: grid; grid-template-columns: 198fr 162fr; align-items: center; height: 26px; line-height: 20px; }
    .facts dt, .facts b { font-size: 13px; }
    .facts .qr { position: absolute; right: 12px; top: 18px; }
    .graph { width: 100%; height: auto; }
    .graph text { font: 11px "Liberation Sans", "Noto Sans CJK JP", sans-serif; fill: #4a4a4a; }
    .legend { display: grid; grid-template-columns: 155fr 155fr; gap: 0 12px; padding: 10px 58px 10px 20px; }
    .legend li { display: flex; align-items: center; gap: 4px; height: 28px; padding-top: 6px; border-bottom: 1px solid #efefef; font-size: 13px; }
    .legend i { width: 10px; height: 10px; margin-bottom: 7px; }
    .legend .unit { margin-left: auto; color: #bdbdbd; font-size: 12px; }
    .legend .red { background: #e2000f; } .legend .navy { background: #0a2359; } .legend .teal { background: #3a9e97; }
    .legend .pink { background: #e85298; } .legend .olive { background: #7a7640; } .legend .ochre { background: #c38a37; }

    .foot { flex: none; position: relative; display: flex; align-items: center; height: 28px; padding: 2px 19px 0 10px; background: #575755; border-bottom: 1px solid #a9a9a8; color: #b5b5b4; font-size: 11px; }
    .foot > * { display: flex; align-items: center; gap: 5px; }
    .foot .brand { color: #fff; font: 700 16px/20px "Open Sans", sans-serif; margin-right: 22px; gap: 3px; padding-bottom: 2px; }
    .foot .gap { margin-right: 12px; }
    .foot .links { margin-left: auto; gap: 14px; color: #fff; font-size: 13px; }
    .foot .links a { display: flex; align-items: center; gap: 3px; }
    .foot .links b { font-size: 14px; margin-right: 2px; }
  `;

  private head(label: unknown, cls = "", up = false) {
    return html`<th class=${cls} scope="col"><button>${label}${up ? html`<svg class="ic s up" viewBox="0 0 16 16">${shapes.sortup}</svg>` : icon("sort", "s")}</button></th>`;
  }

  render() {
    return html`
      <div class="chrome">
        <button class="back" aria-label="戻る">${icon("back", "l")}</button>
        <button class="dim" aria-label="進む">${icon("forward", "l")}</button>
        <button class="step" aria-label="再読み込み">${icon("reload", "l")}</button>
        <button class="step" aria-label="ホーム">${icon("house", "l")}</button>
        <div class="address">
          ${icon("info")}
          <input aria-label="アドレス" value="netflow.ribf.local/sensor.htm?id=2373&tabid=1" />
          <button aria-label="ページ操作">${icon("dots", "l")}</button>
          <button aria-label="Pocket">${icon("pocket", "l")}</button>
          <button aria-label="ブックマーク">${icon("starline", "l")}</button>
        </div>
        <div class="tools">
          <button class="dl" aria-label="ダウンロード">${icon("download", "l")}</button>
          <button aria-label="ライブラリ">${icon("library", "l")}</button>
          <button aria-label="サイドバー">${icon("sidebar", "l")}</button>
          <button aria-label="PDF">${icon("pdf", "l")}</button>
        </div>
        <button class="menu-btn" aria-label="メニュー">${icon("burger", "l")}</button>
      </div>

      <header class="top">
        <div class="status">
          ${badges.map(([c, i, n]) => html`<a class="badge ${c}" href="#">${i.length === 1 ? html`<b>${i}</b>` : icon(i)}<span>${n}</span></a>`)}
          <div class="search">
            <input aria-label="検索" placeholder="検索..." />
            <button aria-label="検索">${icon("search")}</button>
          </div>
          <button class="power" aria-label="ログアウト">${icon("power", "m")}</button>
        </div>
        <nav class="nav">
          <a class="home" href="#">${icon("gauge", "l")}ホーム</a>
          ${menu.map((m) => html`<a href="#">${m}</a>`)}
        </nav>
      </header>

      <ul class="crumbs">
        <li><a href="#" aria-label="ホーム">${icon("homefill")}</a></li>
        <li><a href="#">デバイス</a></li>
        ${crumbs.map(([c, k]) => html`<li><a href="#" class=${k}>${c}</a><button aria-label="開く">${icon("caret", "s")}</button></li>`)}
      </ul>

      <section class="banner">
        <div class="title">
          <div class="check">${icon("check")}</div>
          <div>
            <h1>センサー NetFlow V9</h1>
            <div class="ok">OK</div>
          </div>
          <div class="flag">${icon("flag")}</div>
          <div class="stars">${[1, 2, 3, 4, 5].map(() => icon("star"))}</div>
        </div>
        <div class="actions">
          <button aria-label="一時停止">${icon("pause", "s")}</button>
          <button aria-label="レポートに追加">${icon("addreport")}</button>
          <button aria-label="メール">${icon("mail")}</button>
          <button aria-label="更新">${icon("refresh")}</button>
          <button aria-label="削除">${icon("trash")}</button>
          <button aria-label="その他の操作">${icon("caret", "s")}</button>
        </div>
      </section>

      <nav class="tabs">
        ${tabs.map(([i, t], n) => html`<a href="#" class=${n === 0 ? "on" : i ? "" : "plain"}>${i ? icon(i) : ""}${t}</a>`)}
      </nav>

      <main class="page">
        <div class="col">
          <section class="card tops">
            <ul class="rings">
              ${rings.map((r) => html`<li><h2>${r.title}</h2>${ringSvg(r)}
                <div class="ops">
                  <button aria-label="設定">${icon("gears")}</button>
                  <button aria-label="削除">${icon("trash")}</button>
                  <button aria-label="開く">${icon("external")}</button>
                </div></li>`)}
            </ul>
            <div class="add"><button>トップリストに追加</button></div>
          </section>

          <section class="card meters">
            <div class="primary">
              <h2>合計</h2>
              <div class="dialbox">${dial(1, true)}<div class="scale"><span>0</span><span>3,551,832 kbi...</span></div></div>
              <div class="val">67,272 kbit/<b>秒</b></div>
              <div class="pins">${icon("gear", "s")}${icon("pin", "s")}</div>
            </div>
            <ul class="small">
              ${gauges.map(([n, v, t, m]) => html`<li>
                <div class="txt"><h3 class=${n === "その他" ? "jp" : ""}>${n}</h3><span>${v} kbit/<b>秒</b></span></div>
                ${dial(t, false, m)}
                <div class="pins">${icon("gear", "xs")}${icon("pin", "xs")}</div>
              </li>`)}
            </ul>
          </section>

          <section class="card channels">
            <table>
              <colgroup><col style="width:20%" /><col style="width:6.400%" /><col style="width:8%" /><col style="width:11.800%" /><col style="width:20.700%" /><col style="width:21.600%" /><col /></colgroup>
              <thead><tr>
                ${this.head("チャンネル")}
                ${this.head("ID", "lite")}
                ${this.head(html`最新値<br />（量）`, "c", true)}
                ${this.head(html`最新値 （速<br />度）`, "c")}
                ${this.head("最小値", "r")}
                ${this.head("最大値", "r")}
                <th></th>
              </tr></thead>
              <tbody>
                ${rows.map(([n, id, vol, speed, max]) => html`<tr>
                  <td>${n}</td><td>${id}</td><td class="c">${vol}</td><td class="c">${speed} kbit/秒</td>
                  <td class="r">0 kbit/秒</td><td class="r">${max} kbit/秒</td>
                  <td><button aria-label="${n} の設定">${icon("gears")}</button></td>
                </tr>`)}
              </tbody>
            </table>
          </section>
        </div>

        <aside class="col">
          <section class="card facts">
            <dl>${facts.map(([k, v]) => html`<div><dt>${k}</dt><dd>${v}</dd></div>`)}</dl>
            <button class="qr" aria-label="QR">${icon("qr", "l")}</button>
          </section>
          <section class="card">
            ${graphs.map(graphSvg)}
            <ul class="legend">
              ${legend.map(([c, n, u]) => html`<li><i class=${c}></i><span>${n}</span><span class="unit">${u}</span></li>`)}
            </ul>
          </section>
        </aside>
      </main>

      <footer class="foot">
        <div class="brand">${icon("logo")}PAESSLER</div>
        <span class="gap">18.2.39.1661+</span>
        <span class="gap">PRTGシステム管理者</span>
        <span class="gap">${icon("clock", "m")}4:06</span>
        <span>${icon("pause", "s")}更新まで 7 秒</span>
        <div class="links"><a href="#">${icon("mail")}サポートに問い合わせる</a><a href="#"><b>?</b>ヘルプ</a></div>
      </footer>
    `;
  }
}
